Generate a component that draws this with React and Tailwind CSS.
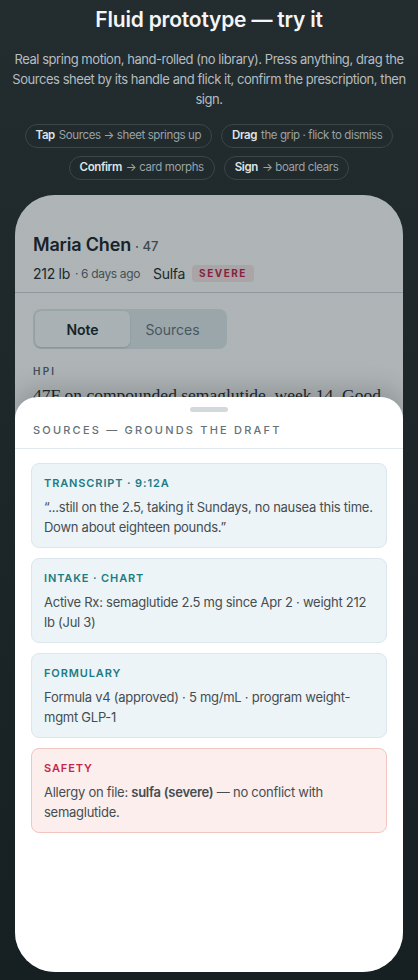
const sans = { fontFamily: 'Inter, "Noto Sans", sans-serif' };
const serif = { fontFamily: '"Liberation Serif", "DejaVu Serif", serif' };

const hints = [
  [
    { key: 'Tap', rest: 'Sources → sheet springs up' },
    { key: 'Drag', rest: 'the grip · flick to dismiss' },
  ],
  [
    { key: 'Confirm', rest: '→ card morphs' },
    { key: 'Sign', rest: '→ board clears' },
  ],
];

const sources = [
  {
    label: 'TRANSCRIPT · 9:12A',
    body: '“...still on the 2.5, taking it Sundays, no nausea this time. Down about eighteen pounds.”',
  },
  {
    label: 'INTAKE · CHART',
    body: 'Active Rx: semaglutide 2.5 mg since Apr 2 · weight 212 lb (Jul 3)',
  },
  {
    label: 'FORMULARY',
    body: 'Formula v4 (approved) · 5 mg/mL · program weight-mgmt GLP-1',
  },
];

function SourceCard({ label, children, alert }) {
  return (
    <div
      className={`rounded-lg border px-[12px] pt-[11px] pb-[10px] ${
        alert ? 'border-[#f1c6c1] bg-[#fbeeed]' : 'border-[#dbe7ec] bg-[#edf4f7]'
      }`}
    >
      <div
        className={`text-[11px] font-semibold leading-4 tracking-[0.08em] ${
          alert ? 'text-[#c7264b]' : 'text-[#1b7c85]'
        }`}
      >
        {label}
      </div>
      <p className="mt-[6px] text-[13px] leading-5 tracking-[-0.02em] text-[#454d50]">{children}</p>
    </div>
  );
}

export default function App() {
  return (
    <div
      className="min-h-[980px] bg-gradient-to-b from-[#232c2f] to-[#161f21] pt-[6px]"
      style={sans}
    >
      <h1 className="text-center text-[21px] font-semibold leading-7 tracking-[-0.01em] text-[#f3f5f6]">
        Fluid prototype — try it
      </h1>
      <p className="mx-auto mt-[15px] w-[410px] text-center text-[13px] leading-5 tracking-[-0.035em] text-[#b5bdc0]">
        Real spring motion, hand-rolled (no library). Press anything, drag the Sources sheet by its
        handle and flick it, confirm the prescription, then sign.
      </p>

      <div className="mt-[15px] flex flex-col items-center gap-2">
        {hints.map((row, i) => (
          <div key={i} className="flex gap-[9px]">
            {row.map((h) => (
              <span
                key={h.key}
                className="flex h-6 items-center whitespace-nowrap rounded-full border border-[#3a4649] px-[10px] text-[11.5px] tracking-[-0.035em] text-[#98a3a7]"
              >
                <b className="mr-1 font-semibold text-[#dde4e6]">{h.key}</b>
                {h.rest}
              </span>
            ))}
          </div>
        ))}
      </div>

      {/* phone */}
      <div className="relative mx-auto mt-[15px] h-[777px] w-[388px] overflow-hidden rounded-[40px] bg-white">
        <div className="px-[18px] pt-[38px]">
          <div className="flex items-baseline gap-1">
            <span className="text-[18px] font-semibold leading-6 tracking-[-0.01em] text-[#152024]">
              Maria Chen
            </span>
            <span className="text-[13px] font-medium text-[#525c60]">· 47</span>
          </div>
          <div className="mt-[6px] flex items-center">
            <span className="text-[14px] tracking-[-0.02em] text-[#1d272b]">212 lb</span>
            <span className="ml-[5px] text-[12px] tracking-[-0.03em] text-[#5b6569]">· 6 days ago</span>
            <span className="ml-[13px] text-[14px] tracking-[-0.02em] text-[#1d272b]">Sulfa</span>
            <span className="ml-[7px] rounded-[4px] bg-[#f9e6e8] px-[7px] py-[1px] text-[10px] font-bold tracking-[0.15em] text-[#c21a48]">
              SEVERE
            </span>
          </div>
        </div>
        <div className="mt-[8px] border-t border-[#cfd4d6]" />

        <div className="px-[18px] pt-[16px]">
          <div className="flex h-10 w-[194px] rounded-lg bg-[#e1e9ec] p-[2px]">
            <div className="flex w-[95px] items-center justify-center rounded-md bg-[#f7fafb] text-[14px] font-semibold text-[#152024] shadow-[0_1px_2px_rgba(0,0,0,0.15)]">
              Note
            </div>
            <div className="flex flex-1 items-center justify-center pr-[10px] text-[14px] text-[#62707a]">
              Sources
            </div>
          </div>
          <div className="mt-[15px] text-[10px] font-semibold tracking-[0.22em] text-[#56636a]">HPI</div>
          <p className="mt-[4px] text-[17.5px] leading-6 text-[#1d272b]" style={serif}>
            47F on compounded semaglutide, week 14. Good tolerance, no nausea reported this visit.
          </p>
        </div>

        {/* scrim over the board while the sheet is up */}
        <div className="absolute inset-0 bg-gradient-to-b from-[#182a30]/35 via-[#182a30]/35 to-[#0c1418]/50" />

        {/* sources sheet */}
        <div className="absolute inset-x-0 bottom-0 top-[202px] rounded-t-[22px] bg-white shadow-[0_-8px_24px_rgba(0,0,0,0.18)]">
          <div className="mx-auto mt-[10px] h-[5px] w-[38px] rounded-full bg-[#d3d8db]" />
          <div className="px-[18px] pt-[10px] pb-[9px] text-[11px] font-medium tracking-[0.2em] text-[#667176]">
            SOURCES — GROUNDS THE DRAFT
          </div>
          <div className="border-t border-[#e2e8eb]" />
          <div className="flex flex-col gap-[10px] px-4 pt-[14px]">
            {sources.map((s) => (
              <SourceCard key={s.label} label={s.label}>
                {s.body}
              </SourceCard>
            ))}
            <SourceCard label="SAFETY" alert>
              Allergy on file: <b className="font-semibold">sulfa (severe)</b> — no conflict with
              semaglutide.
            </SourceCard>
          </div>
        </div>
      </div>
    </div>
  );
}
